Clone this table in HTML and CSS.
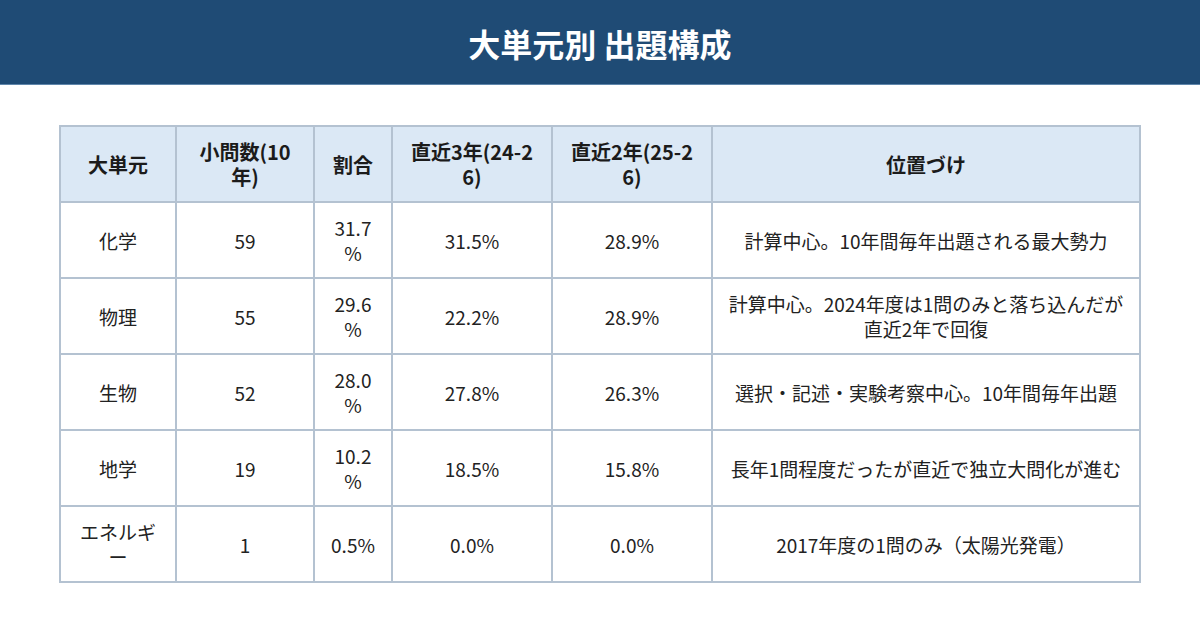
FILE: index.html
```html
<!DOCTYPE html>
<html lang="ja">
<head>
<meta charset="utf-8">
<title>大単元別 出題構成</title>
<link rel="stylesheet" href="styles.css">
</head>
<body>
<header class="banner">
  <h1 class="title">大単元別 出題構成</h1>
</header>
<main class="content">
  <table class="grid">
    <colgroup>
      <col class="c1"><col class="c2"><col class="c3"><col class="c4"><col class="c5"><col class="c6">
    </colgroup>
    <thead>
      <tr>
        <th>大単元</th>
        <th>小問数(10年)</th>
        <th>割合</th>
        <th>直近3年(24-26)</th>
        <th>直近2年(25-26)</th>
        <th>位置づけ</th>
      </tr>
    </thead>
    <tbody>
      <tr><td>化学</td><td>59</td><td>31.7%</td><td>31.5%</td><td>28.9%</td><td>計算中心。10年間毎年出題される最大勢力</td></tr>
      <tr><td>物理</td><td>55</td><td>29.6%</td><td>22.2%</td><td>28.9%</td><td>計算中心。2024年度は1問のみと落ち込んだが直近2年で回復</td></tr>
      <tr><td>生物</td><td>52</td><td>28.0%</td><td>27.8%</td><td>26.3%</td><td>選択・記述・実験考察中心。10年間毎年出題</td></tr>
      <tr><td>地学</td><td>19</td><td>10.2%</td><td>18.5%</td><td>15.8%</td><td>長年1問程度だったが直近で独立大問化が進む</td></tr>
      <tr><td>エネルギー</td><td>1</td><td>0.5%</td><td>0.0%</td><td>0.0%</td><td>2017年度の1問のみ（太陽光発電）</td></tr>
    </tbody>
  </table>
</main>
</body>
</html>
```

FILE: styles.css
```css
html, body {
  margin: 0;
  padding: 0;
  background: #ffffff;
}
body {
  font-family: "Noto Sans CJK JP", "Noto Sans", sans-serif;
  color: #222222;
}
.banner {
  height: 84px;
  background: #1f4b75;
  border-bottom: 1px solid #5f86ab;
  display: flex;
  align-items: center;
  justify-content: center;
}
.title {
  margin: 0;
  color: #ffffff;
  font-size: 32px;
  font-weight: 700;
  line-height: 1;
  padding-top: 2px;
}
.content {
  padding-top: 40px;
  display: flex;
  justify-content: center;
}
.grid {
  width: 1080px;
  table-layout: fixed;
  border-collapse: collapse;
  border: 2px solid #b4c2d1;
  font-size: 19px;
  line-height: 25px;
}
.c1 { width: 116px; }
.c2 { width: 138px; }
.c3 { width: 78px; }
.c4 { width: 160px; }
.c5 { width: 160px; }
.c6 { width: 428px; }
.grid th, .grid td {
  border: 2px solid #b4c2d1;
  padding: 12px 12px;
  text-align: center;
  vertical-align: middle;
  line-break: anywhere;
}
.grid th {
  background: #dbe8f5;
  font-size: 20px;
  font-weight: 700;
  color: #1b1b1b;
  padding: 12px 16px;
}
.grid td {
  font-weight: 400;
  color: #222222;
}
```
